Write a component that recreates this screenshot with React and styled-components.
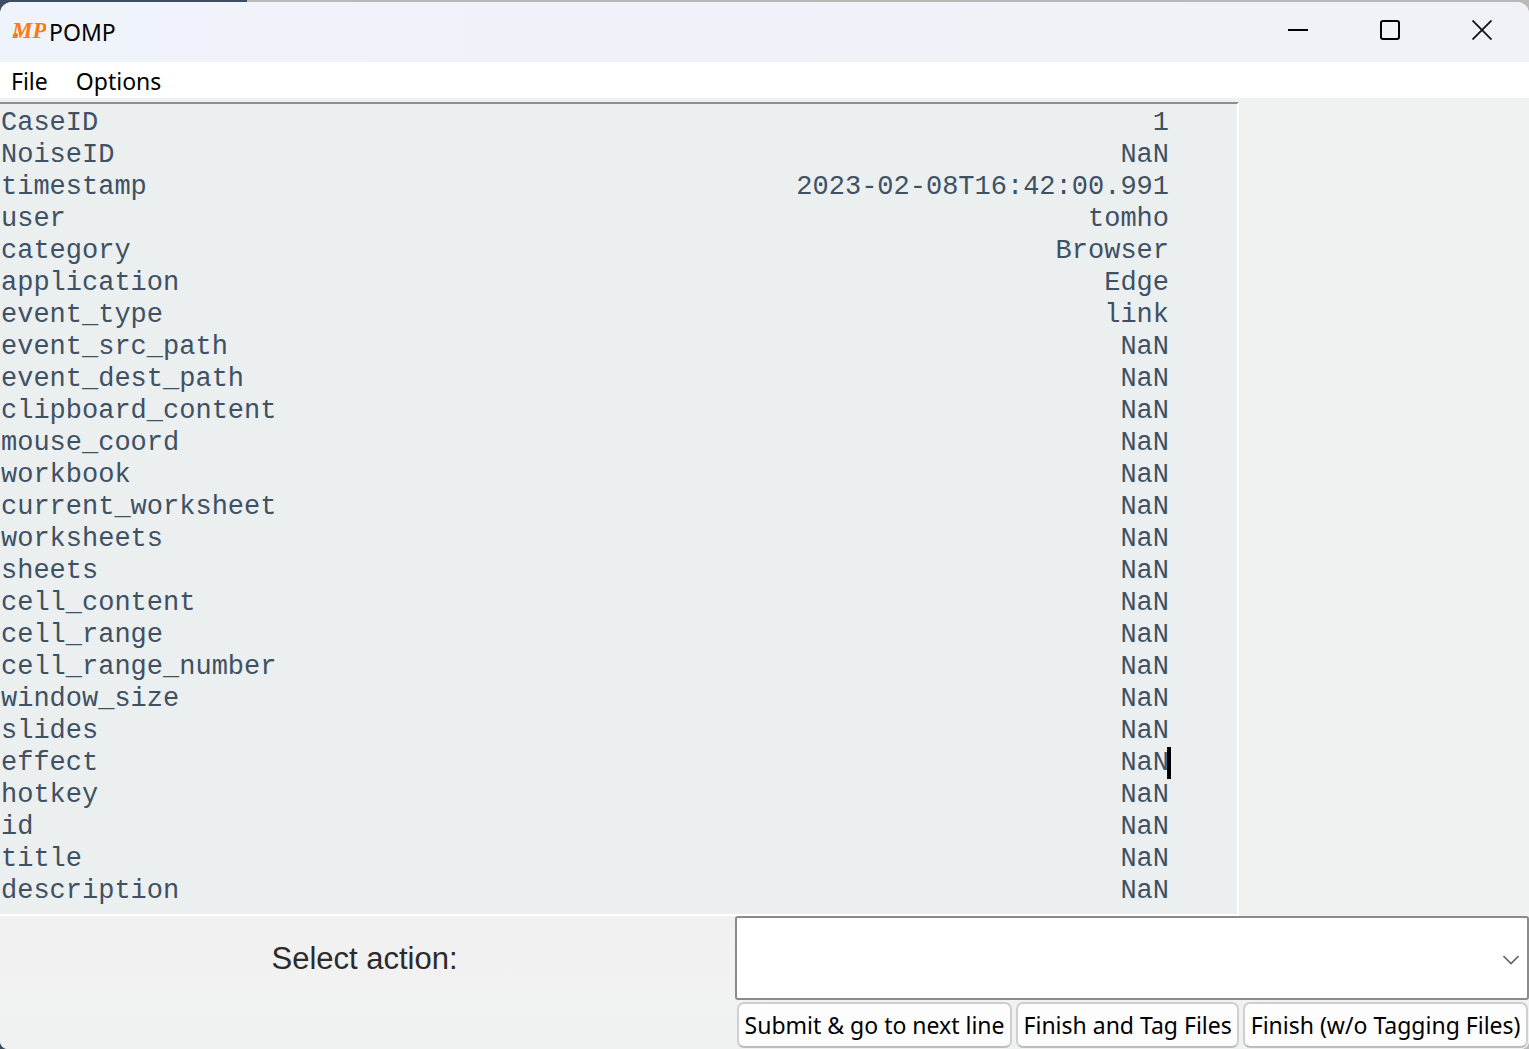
import React from "react";
import styled, { createGlobalStyle } from "styled-components";

const ui = '"Noto Sans", "Open Sans", sans-serif';

const GlobalStyle = createGlobalStyle`
  *, *::before, *::after { box-sizing: border-box; }
  body {
    margin: 0;
    background: linear-gradient(90deg, #3d4d63 0 247px, #b9b9b9 247px);
    font-family: ${ui};
    color: #000;
  }
`;

const Desktop = styled.div`
  min-height: 100vh;
  padding-top: 2px;
  display: flex;
  flex-direction: column;
`;

const Window = styled.main`
  flex: 1;
  display: flex;
  flex-direction: column;
  background: #f0f2f1;
  border-radius: 12px 12px 8px 8px;
  overflow: hidden;
`;

const TitleBar = styled.header`
  height: 60px;
  display: flex;
  align-items: flex-start;
  background: linear-gradient(90deg, #eff3fb, #f1f2f7);
  padding: 0 1px 0 12px;
`;

const Title = styled.h1`
  flex: 1;
  margin: 0;
  padding-left: 3px;
  font-size: 23px;
  line-height: 60px;
  font-weight: 400;
`;

const LogoMark = styled.svg`
  display: block;
  width: 34px;
  height: 56px;
`;

const WindowButton = styled.button`
  width: 92px;
  height: 56px;
  padding: 0;
  border: 0;
  background: transparent;
  display: grid;
  place-items: center;
`;

const MenuBar = styled.nav`
  height: 36px;
  display: flex;
  align-items: flex-end;
  gap: 28px;
  padding: 0 11px;
  background: #fff;
`;

const MenuButton = styled.button`
  padding: 0;
  border: 0;
  background: transparent;
  color: #000;
  font: 400 23px/34px ${ui};
`;

const Workspace = styled.section`
  display: grid;
  grid-template-columns: minmax(0, 1fr) 290px;
  padding-top: 4px;
`;

const EventPanel = styled.div`
  background: #ebeff0;
  border-top: 2px solid #8c8f92;
  border-right: 2px solid #fff;
  border-bottom: 2px solid #fff;
  padding: 3px 68px 7px 1px;
`;

const EventTable = styled.table`
  width: 100%;
  border-collapse: collapse;
  font: 400 27px/32px "Liberation Mono", monospace;
  color: #3f5163;
`;

const Name = styled.th`
  padding: 0;
  text-align: left;
  font-weight: 400;
`;

const Value = styled.td`
  padding: 0;
  text-align: right;
`;

const CaretHost = styled.span`
  position: relative;
`;

const Caret = styled.span`
  position: absolute;
  top: -1px;
  bottom: -1px;
  right: -2px;
  width: 4px;
  background: #000;
`;

const ActionBar = styled.section`
  flex: 1;
  display: grid;
  grid-template-columns: 25fr 27fr;
  background: linear-gradient(#f2f1f1, #f0f2f1);
`;

const ActionLabel = styled.label`
  height: 84px;
  padding: 2px 6px 0 0;
  display: grid;
  place-items: center;
  font: 400 31px/36px "Liberation Sans", sans-serif;
  color: #2b2b2b;
`;

const Controls = styled.div`
  min-width: 0;
`;

const SelectBox = styled.div`
  display: grid;
  align-items: center;

  > * { grid-area: 1 / 1; }
  > svg { justify-self: end; margin: 3px 10px 0 0; pointer-events: none; }
`;

const Select = styled.select`
  appearance: none;
  width: 100%;
  height: 84px;
  border: 2px solid #8b8b8b;
  border-radius: 3px;
  background: #fff;
  padding: 0 40px 0 12px;
  font: 400 23px/32px ${ui};
`;

const ButtonRow = styled.div`
  display: flex;
  gap: 4px;
  padding: 2px 1px 1px 2px;
`;

const ActionButton = styled.button`
  flex: 1 0 auto;
  height: 46px;
  padding: 0;
  border: 2px solid #cfcfcf;
  border-bottom-color: #bdbdbd;
  border-radius: 7px;
  background: #fdfdfd;
  color: #000;
  font: 400 23px/32px ${ui};
  white-space: nowrap;
`;

const events = [
  ["CaseID", "1"],
  ["NoiseID", "NaN"],
  ["timestamp", "2023-02-08T16:42:00.991"],
  ["user", "tomho"],
  ["category", "Browser"],
  ["application", "Edge"],
  ["event_type", "link"],
  ["event_src_path", "NaN"],
  ["event_dest_path", "NaN"],
  ["clipboard_content", "NaN"],
  ["mouse_coord", "NaN"],
  ["workbook", "NaN"],
  ["current_worksheet", "NaN"],
  ["worksheets", "NaN"],
  ["sheets", "NaN"],
  ["cell_content", "NaN"],
  ["cell_range", "NaN"],
  ["cell_range_number", "NaN"],
  ["window_size", "NaN"],
  ["slides", "NaN"],
  ["effect", "NaN"],
  ["hotkey", "NaN"],
  ["id", "NaN"],
  ["title", "NaN"],
  ["description", "NaN"],
];

const caretRow = "effect";

function Logo() {
  return (
    <LogoMark viewBox="0 0 34 56" aria-hidden="true">
      <circle cx="3.4" cy="33.6" r="2.6" fill="#ff7a0f" />
      <text x="0" y="36" fill="#ff7a0f" fontFamily="Liberation Serif, serif" fontSize="23" fontWeight="700" fontStyle="italic">MP</text>
    </LogoMark>
  );
}

export default function App() {
  return (
    <>
      <GlobalStyle />
      <Desktop>
        <Window>
          <TitleBar>
            <Logo />
            <Title>POMP</Title>
            <WindowButton aria-label="Minimize">
              <svg width="20" height="20"><path d="M0 10H20" stroke="#000" strokeWidth="2" /></svg>
            </WindowButton>
            <WindowButton aria-label="Maximize">
              <svg width="20" height="20"><rect x="1" y="1" width="18" height="18" rx="2" fill="none" stroke="#000" strokeWidth="2" /></svg>
            </WindowButton>
            <WindowButton aria-label="Close">
              <svg width="20" height="20"><path d="M0.5 0.5L19.5 19.5M19.5 0.5L0.5 19.5" stroke="#111" strokeWidth="1.8" /></svg>
            </WindowButton>
          </TitleBar>
          <MenuBar>
            <MenuButton>File</MenuButton>
            <MenuButton>Options</MenuButton>
          </MenuBar>
          <Workspace>
            <EventPanel>
              <EventTable>
                <tbody>
                  {events.map(([name, value]) => (
                    <tr key={name}>
                      <Name scope="row">{name}</Name>
                      <Value>
                        {name === caretRow ? <CaretHost>{value}<Caret /></CaretHost> : value}
                      </Value>
                    </tr>
                  ))}
                </tbody>
              </EventTable>
            </EventPanel>
          </Workspace>
          <ActionBar>
            <ActionLabel htmlFor="action">Select action:</ActionLabel>
            <Controls>
              <SelectBox>
                <Select id="action" defaultValue=""><option value="" /></Select>
                <svg width="16" height="10" viewBox="0 0 16 10"><path d="M0.5 1L8 8.5L15.5 1" fill="none" stroke="#666" strokeWidth="1.6" /></svg>
              </SelectBox>
              <ButtonRow>
                <ActionButton>Submit &amp; go to next line</ActionButton>
                <ActionButton>Finish and Tag Files</ActionButton>
                <ActionButton>Finish (w/o Tagging Files)</ActionButton>
              </ButtonRow>
            </Controls>
          </ActionBar>
        </Window>
      </Desktop>
    </>
  );
}
